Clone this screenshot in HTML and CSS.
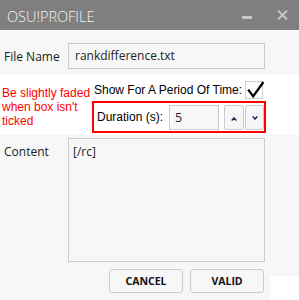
FILE: index.html
```html
<!DOCTYPE html>
<html lang="en">
<head>
  <meta charset="UTF-8" />
  <title>osu!profile</title>
  <link rel="stylesheet" href="styles.css">
</head>
<body>

<div class="window">
  <header class="titlebar">
    <span class="title">OSU!PROFILE</span>
    <div class="controls">
      <span class="minimize"></span>
      <svg class="close" width="11" height="10" viewBox="0 0 11 10">
        <path d="M1 0.5 L10 9.5 M10 0.5 L1 9.5" stroke="#c6c6c6" stroke-width="2" fill="none"/>
      </svg>
    </div>
  </header>

  <div class="field-row">
    <label class="field-label">File Name</label>
    <div class="text-input">rankdifference.txt</div>
  </div>

  <div class="note-band">
    <div class="note">
      <div>Be slightly faded</div>
      <div>when box isn't</div>
      <div>ticked</div>
    </div>
    <div class="period">
      <div class="period-toggle">
        <span class="period-text">Show For A Period Of Time:</span>
        <span class="checkbox">
          <svg width="18" height="18" viewBox="0 0 18 18">
            <path d="M2.2 8.6 L7.2 15.4 L17.4 1" stroke="#000" stroke-width="2.3" fill="none"/>
          </svg>
        </span>
      </div>
      <div class="duration">
        <span class="duration-label">Duration (s):</span>
        <div class="num-input">5</div>
        <button class="spin">
          <svg width="6" height="4" viewBox="0 0 6 4"><path d="M0.7 3.5 L3 1 L5.3 3.5" stroke="#1b2a5e" stroke-width="1.5" fill="none"/></svg>
        </button>
        <button class="spin spin-down">
          <svg width="6" height="4" viewBox="0 0 6 4"><path d="M0.7 0.5 L3 3 L5.3 0.5" stroke="#1b2a5e" stroke-width="1.5" fill="none"/></svg>
        </button>
      </div>
    </div>
  </div>

  <div class="lower">
    <div class="lower-main">
      <div class="field-row content-row">
        <label class="field-label">Content</label>
        <div class="text-area">[/rc]</div>
      </div>
      <div class="actions">
        <button class="action">CANCEL</button>
        <button class="action">VALID</button>
      </div>
    </div>
    <div class="lower-side"></div>
  </div>
</div>

</body>
</html>
```

FILE: styles.css
```css
body {
  margin: 0;
  width: 299px;
  height: 300px;
  overflow: hidden;
  background: #fff;
  font-family: 'Open Sans', sans-serif;
  font-size: 12px;
  color: #1c1c1c;
}
.window {
  display: flex;
  flex-direction: column;
}
.titlebar {
  height: 30px;
  background: #7f7f7f;
  display: flex;
  align-items: center;
  justify-content: space-between;
  padding: 0 11px 0 7px;
}
.title {
  font-weight: 300;
  font-size: 14.5px;
  color: #f4f4f4;
  margin-top: 2px;
}
.controls {
  display: flex;
  align-items: center;
  gap: 25px;
}
.minimize {
  width: 10px;
  height: 3px;
  background: #c6c6c6;
  margin-top: 5px;
}
.close {
  display: block;
}
.field-row {
  display: grid;
  grid-template-columns: 64px 197px;
  align-items: center;
  background: #f7f7f7;
  padding: 13px 0 6px 4px;
}
.field-label {
  color: #1c1c1c;
}
.text-input {
  height: 24px;
  line-height: 24px;
  border: 1px solid #cbcbcb;
  padding-left: 6px;
  color: #222;
}
.note-band {
  display: grid;
  grid-template-columns: 92px 174px;
  height: 60px;
  width: 270px;
  background: #fff;
  font-family: 'Liberation Sans', Arial, sans-serif;
  font-size: 12px;
}
.note {
  padding: 11px 0 0 2px;
  font-size: 12px;
  line-height: 14px;
  color: #f00;
  white-space: nowrap;
}
.period {
  padding-top: 6px;
  color: #000;
  font-size: 12px;
}
.period-toggle {
  display: flex;
  align-items: center;
  height: 18px;
  padding-left: 2px;
}
.period-text {
  width: 151px;
  white-space: nowrap;
}
.checkbox {
  width: 18px;
  height: 18px;
  box-sizing: border-box;
  border: 1px solid #cfcfcf;
  position: relative;
}
.checkbox svg {
  position: absolute;
  left: 0;
  top: -1px;
}
.duration {
  margin-top: 2px;
  width: 174px;
  height: 32px;
  box-sizing: border-box;
  border: 2px solid #f00;
  display: flex;
  align-items: center;
  padding-left: 3px;
}
.duration-label {
  width: 72px;
  flex-shrink: 0;
  white-space: nowrap;
}
.num-input {
  width: 50px;
  height: 25px;
  flex-shrink: 0;
  box-sizing: border-box;
  border: 1px solid #cbcbcb;
  background: #f7f7f7;
  font-family: 'Open Sans', sans-serif;
  font-size: 12.5px;
  line-height: 23px;
  padding-left: 5px;
  color: #1a1a2e;
  margin-right: 5px;
}
.spin {
  width: 20px;
  height: 25px;
  flex-shrink: 0;
  padding: 0;
  border: 1px solid #cbcbcb;
  border-radius: 2px;
  background: #f6f6f6;
  display: flex;
  align-items: center;
  justify-content: center;
}
.spin svg {
  display: block;
  margin-top: 4px;
}
.spin-down {
  margin-left: 1px;
  width: 19px;
}
.spin-down svg {
  margin-top: 2px;
}
.lower {
  display: flex;
  height: 165px;
}
.lower-main {
  width: 270px;
  background: #f7f7f7;
}
.lower-side {
  flex: 1;
  height: 141px;
  background: #f7f7f7;
}
.content-row {
  padding: 3px 0 0 4px;
  align-items: start;
}
.content-row .field-label {
  padding-top: 5px;
}
.text-area {
  border: 1px solid #cbcbcb;
  padding: 4px 0 0 4px;
  box-sizing: border-box;
  height: 124px;
}
.actions {
  display: flex;
  justify-content: flex-end;
  gap: 7px;
  padding: 7px 6px 0 0;
}
.action {
  width: 74px;
  height: 24px;
  border: 1px solid #cbcbcb;
  border-radius: 3px;
  background: #f7f7f7;
  font-family: 'Open Sans', sans-serif;
  font-weight: 700;
  font-size: 10.5px;
  color: #111;
  padding: 0;
}
```
